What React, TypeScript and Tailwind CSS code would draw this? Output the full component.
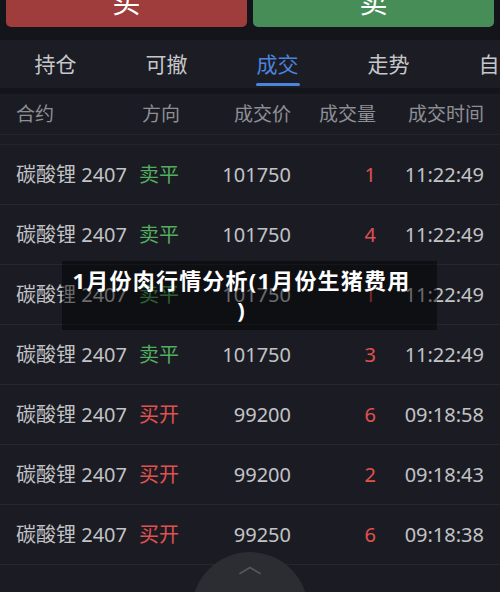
// ── Data ───────────────────────────────────────────────────────────────────────

type Trade = { side: '卖平' | '买开'; price: string; qty: string; time: string }

const TRADES: Trade[] = [
  { side: '卖平', price: '101750', qty: '1', time: '11:22:49' },
  { side: '卖平', price: '101750', qty: '4', time: '11:22:49' },
  { side: '卖平', price: '101750', qty: '1', time: '11:22:49' },
  { side: '卖平', price: '101750', qty: '3', time: '11:22:49' },
  { side: '买开', price: '99200', qty: '6', time: '09:18:58' },
  { side: '买开', price: '99200', qty: '2', time: '09:18:43' },
  { side: '买开', price: '99250', qty: '6', time: '09:18:38' },
]

const TABS = ['持仓', '可撤', '成交', '走势', '自选']

const FONT = "font-['Noto_Sans','Noto_Sans_CJK_SC',sans-serif]"

// ── Pieces ─────────────────────────────────────────────────────────────────────

function TradeButtons() {
  return (
    <div className="flex gap-[6px] px-[6px] h-[40px] bg-[#14151a]">
      <div className="flex-1 h-[27px] rounded-b-[5px] bg-[#9f3c3c] flex justify-center overflow-hidden">
        <span className="text-[28px] leading-[28px] mt-[-12px] text-white">买</span>
      </div>
      <div className="flex-1 h-[27px] rounded-b-[5px] bg-[#478d58] flex justify-center overflow-hidden">
        <span className="text-[28px] leading-[28px] mt-[-12px] text-white">卖</span>
      </div>
    </div>
  )
}

function TabBar({ active }: { active: number }) {
  return (
    <div className="flex h-[48px] bg-[#1c1d24] overflow-hidden">
      {TABS.map((t, i) => (
        <div key={t} className="w-[111px] shrink-0 flex flex-col items-center pt-[12px]">
          <span
            className={`text-[21px] leading-[24px] ${i === active ? 'text-[#4b84de]' : 'text-[#c6c7ca]'}`}
          >
            {t}
          </span>
          {i === active && <div className="mt-[7px] w-[44px] h-[3px] rounded-full bg-[#4b84de]" />}
        </div>
      ))}
    </div>
  )
}

function HeaderRow() {
  return (
    <div className="flex items-center h-[41px] border-b border-[#23252d] text-[19px] text-[#8d8f95]">
      <div className="w-[139px] pl-[16px]">合约</div>
      <div className="w-[83px] pl-[3px]">方向</div>
      <div className="w-[69px] text-right whitespace-nowrap">成交价</div>
      <div className="w-[85px] text-right whitespace-nowrap">成交量</div>
      <div className="w-[108px] text-right whitespace-nowrap">成交时间</div>
    </div>
  )
}

function TradeRow({ t }: { t: Trade }) {
  const sell = t.side === '卖平'
  return (
    <div className="flex items-center h-[60px] border-b border-[#262830] text-[20px] text-[#c2c3c6]">
      <div className="w-[139px] pl-[16px] whitespace-nowrap">碳酸锂 2407</div>
      <div className={`w-[83px] ${sell ? 'text-[#52ad5e]' : 'text-[#e0514f]'}`}>{t.side}</div>
      <div className="w-[69px] text-right">{t.price}</div>
      <div className="w-[85px] text-right text-[#e0514f]">{t.qty}</div>
      <div className="w-[108px] text-right">{t.time}</div>
    </div>
  )
}

// ── Main component ─────────────────────────────────────────────────────────────

export default function App() {
  return (
    <div className={`relative w-[500px] h-[592px] overflow-hidden bg-[#1b1c23] ${FONT}`}>
      <TradeButtons />
      <TabBar active={2} />
      <div className="h-[6px] bg-[#14151a]" />
      <HeaderRow />
      <div className="h-[9px]" />
      <div className="border-t border-[#23252d]">
        {TRADES.map((t, i) => (
          <TradeRow key={i} t={t} />
        ))}
      </div>

      {/* Caption overlay */}
      <div className="absolute left-[62px] top-[261px] w-[375px] h-[69px] bg-black/45 pt-[5px] pr-[16px] text-center text-white font-bold text-[22px] leading-[29px] tracking-[1.2px] whitespace-nowrap">
        1月份肉行情分析(1月份生猪费用
        <br />)
      </div>

      {/* Pull-up handle */}
      <div className="absolute left-[192px] top-[552px] w-[116px] h-[116px] rounded-full bg-[#2c2d33] flex justify-center">
        <svg className="mt-[14px]" width="22" height="9" viewBox="0 0 22 9" fill="none">
          <path d="M1 7.5L11 1.5L21 7.5" stroke="#57585e" strokeWidth="1.6" strokeLinecap="round" strokeLinejoin="round" />
        </svg>
      </div>
    </div>
  )
}
